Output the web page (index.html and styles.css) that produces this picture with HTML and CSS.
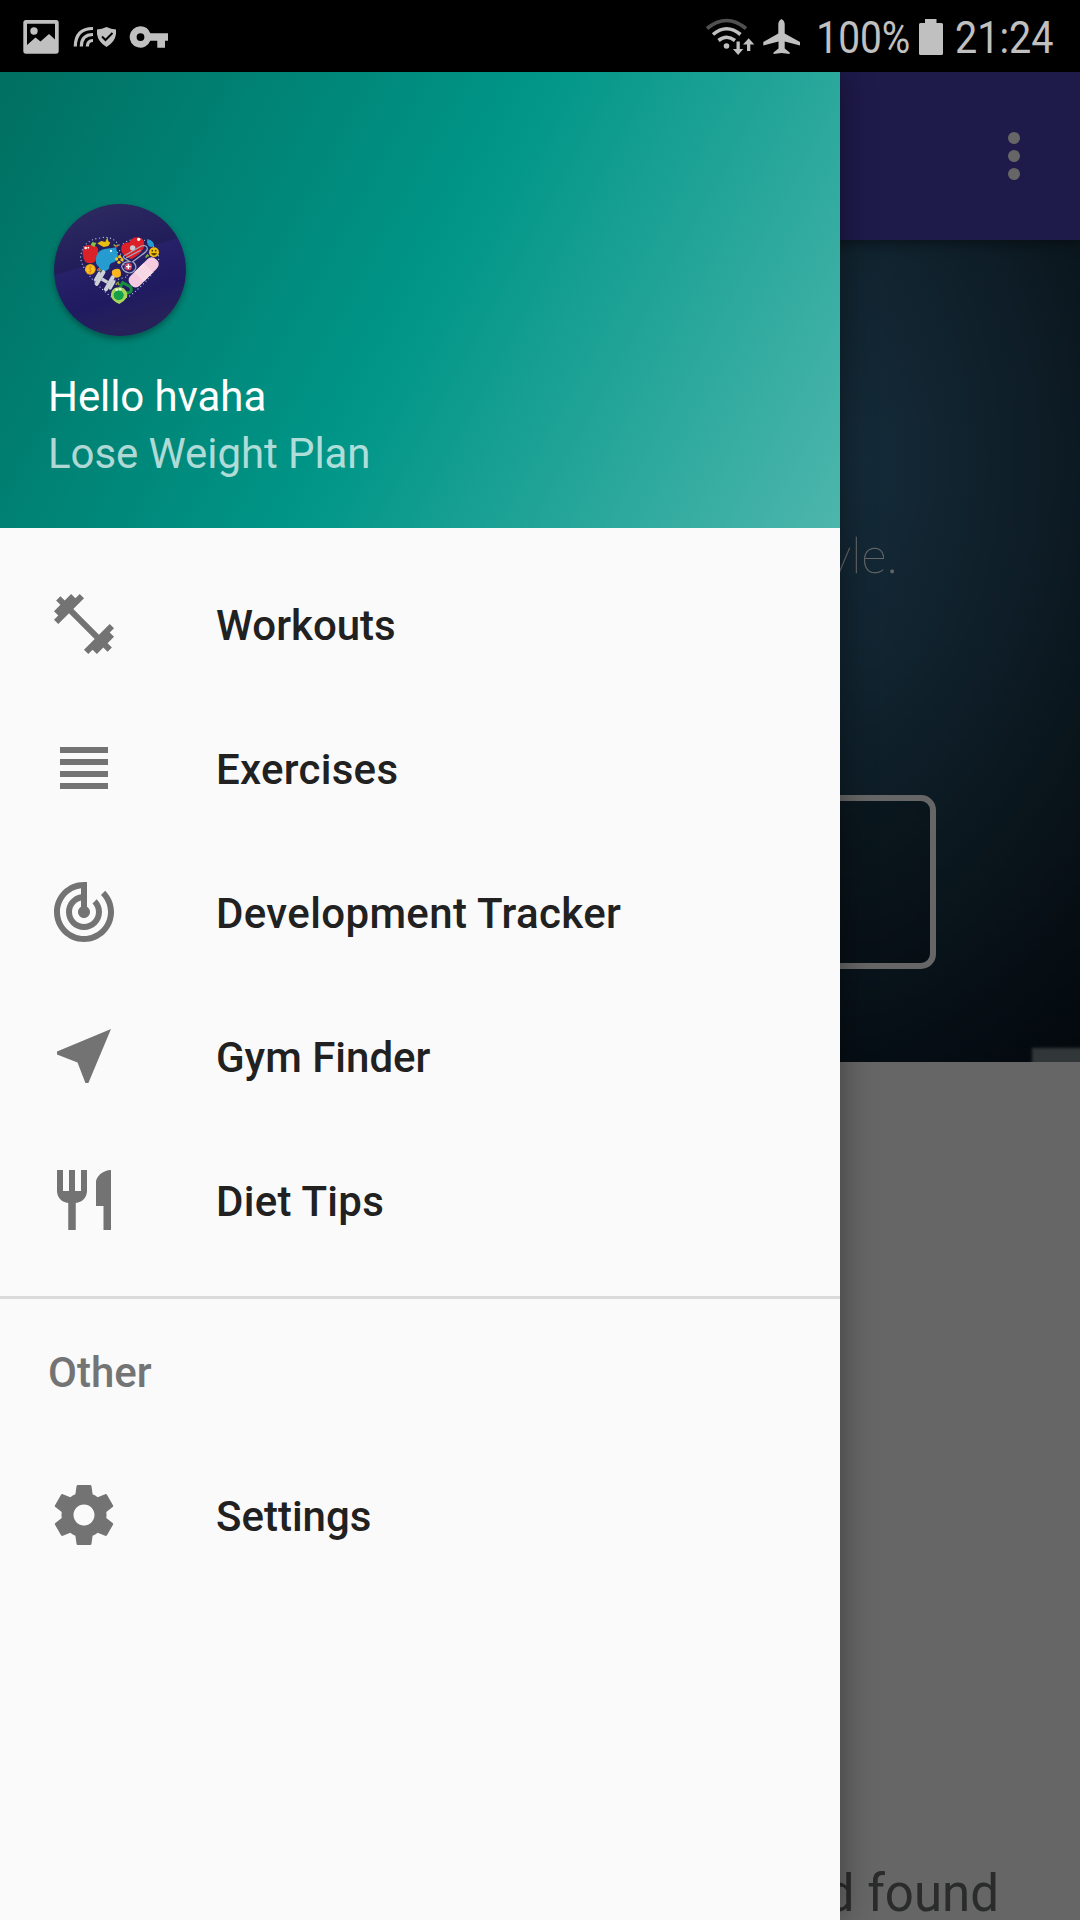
FILE: index.html
```html
<!DOCTYPE html>
<html lang="en">
<head>
<meta charset="utf-8">
<title>Workout app</title>
<link rel="stylesheet" href="styles.css">
</head>
<body>
<div class="screen">
  <header class="status">
    <svg class="st-image" width="42" height="72" viewBox="20 0 42 72"><path fill-rule="evenodd" d="M26 20h30q2.700 0 2.700 2.700v28.300q0 2.700-2.700 2.700H26q-2.700 0-2.700-2.700V22.700Q23.300 20 26 20zM27 23.700V45l8.500-7.500 5 4 8.500-7.500 6 5.500V23.700z"/><circle cx="34" cy="31" r="3.700"/></svg>
    <svg class="st-shield" width="46" height="72" viewBox="72 0 46 72"><g class="arcs"><path d="M75.300 46.500Q75.500 28.500 93 28.500M81.300 46.500Q81.500 34.500 93 34.500M87.300 46.500Q87.500 40.500 93 40.500"/></g><path d="M97 29.500Q102 29 106.500 27 111 29 116 29.500V34Q115 42 106.500 47 98 42 97 34z"/><path class="tick" d="M102 36.500l3.500 3.500 7-7"/></svg>
    <svg class="st-key" width="42" height="72" viewBox="128 0 42 72"><path fill-rule="evenodd" d="M140.500 26.300a10.700 10.700 0 1 0 9.800 14.500h7v6.900h7.700v-6.900h3v-7.500h-17.700a10.700 10.700 0 0 0-9.800-7zM140.500 33.200a3.900 3.900 0 1 1 0 7.800a3.900 3.900 0 0 1 0-7.800z"/></svg>
    <span class="spacer"></span>
    <svg width="52" height="72" viewBox="704 0 52 72"><g class="wifi"><path class="weak" d="M707 28.500Q726.500 12.500 746 28.500"/><path d="M713 34.500Q726.500 23 740.500 34.500M718.500 40.500Q726.500 34 735 40.500"/></g><circle cx="726.500" cy="46" r="2.800"/><path d="M736.500 41.500h3.300v7.500h3.500l-5.200 6-5.200-6h3.600zM747 51h3.300v-6.500h4L748.700 38.200l-5.700 6.300h4z"/></svg>
    <svg class="st-plane" width="38" height="72" viewBox="762 0 38 72"><path d="M781.500 19q3 1.500 3.200 5v9.500L800 42v3.500l-15.300-4v7l5 4V54l-8.200-1-8 1v-1.500l5-4v-7L763.300 45.500V42l15-8.500V24q.2-3.500 3.200-5z"/></svg>
    <svg class="st-pct" width="100" height="72" viewBox="813 0 100 72"><text x="816.300" y="53.300" textLength="94" lengthAdjust="spacingAndGlyphs">100%</text></svg>
    <svg class="st-bat" width="26" height="72" viewBox="918 0 26 72"><path d="M925 19h11.500v4h5q1.500 0 1.500 1.500V53.500q0 1.500-1.500 1.500h-21q-1.500 0-1.500-1.500V24.500q0-1.500 1.500-1.500h4.500z"/></svg>
    <svg class="st-time" width="106" height="72" viewBox="950 0 106 72"><text x="955" y="53.300" textLength="98.500" lengthAdjust="spacingAndGlyphs">21:24</text></svg>
  </header>

  <main class="page">
    <div class="appbar">
      <svg width="72" height="72" viewBox="0 0 24 24"><circle cx="12" cy="6" r="2"/><circle cx="12" cy="12" r="2"/><circle cx="12" cy="18" r="2"/></svg>
    </div>
    <section class="hero">
      <p class="tagline">yle.</p>
      <div class="cta"></div>
      <div class="ledge"></div>
    </section>
    <section class="feed"><p class="found">d found</p></section>
    <div class="scrim"></div>
  </main>

  <nav class="drawer">
    <div class="profile">
      <svg class="avatar" width="132" height="132" viewBox="42 42 396 396">
        <defs><linearGradient id="disc" x1="0" y1="0" x2=".3" y2="1"><stop offset="0" stop-color="#302c62"/><stop offset=".49" stop-color="#201d59"/><stop offset=".5" stop-color="#262168"/><stop offset=".8" stop-color="#201b60"/><stop offset="1" stop-color="#262158"/></linearGradient></defs>
        <circle cx="240" cy="240" r="198" fill="url(#disc)"/>
        <g fill="none" stroke="#aebbe0" stroke-width="4" stroke-linecap="round" stroke-dasharray="0 11"><path d="M237 165Q215 135 180 144 128 150 122 200 122 245 215 322"/><path d="M250 160Q275 145 300 146 358 165 356 210 345 260 260 325"/><path d="M188 250l50-70 25 80-55 15"/></g>
        <path fill="#d82228" d="M130 172q8-10 22-6 16-2 22 10 2 26-10 40-14 8-28 0-12-16-6-44z"/>
        <path fill="#8ac048" d="M152 165l5-9 12 3-6 12z"/><circle cx="137" cy="174" r="4" fill="#fff"/><circle cx="145" cy="173" r="2.500" fill="#fff"/>
        <path fill="#e9bd10" d="M172 160l12-7 12 3 6-14 3 12 6 4-6 10-14 3-10-5z"/>
        <path fill="#259bd0" d="M168 206q2-24 25-29l22 -3 14-2 1 10q6 12 2 25-6 10-18 12-8 6-6 16-8 10-22 9l-9-13q-12-8-9-25z"/>
        <circle cx="213" cy="183" r="3.500" fill="#e4f4ff"/>
        <path fill="#dc2028" d="M244 182q-4-25 25-25 6-17 27-15 20 6 16 28-6 20-38 38-24-8-30-26z"/>
        <circle cx="296" cy="148" r="5" fill="#fff"/><circle cx="278" cy="174" r="8" fill="#c5ccd6"/>
        <g fill="none" stroke="#a4abc0" stroke-width="3.500"><path d="M252 204q-4-6 5-9l47-27q18-5 18 9-2 8-17 18l-27 20q12 8 9 20-6 14-19 14-20-4-23-20 4-14 25-14zM258 204l44-23"/></g>
        <circle cx="265" cy="230" r="11" fill="#d94060"/><path d="M258 230h14M265 223v14" stroke="#fff" stroke-width="4"/>
        <path fill="#259bd0" d="M322 147q20 5 20 19-6 9-16 2-6-6-4-21z"/>
        <circle cx="342" cy="187" r="15" fill="#f0bd0b"/><path d="M333 189q9 15 18 0z" fill="#62420c"/><circle cx="337" cy="182" r="2.500" fill="#543708"/><circle cx="347" cy="182" r="2.500" fill="#543708"/>
        <g transform="rotate(-45 311 247)"><rect x="257" y="227" width="108" height="40" rx="17" fill="#f6cbe0"/><rect x="292" y="227" width="38" height="40" fill="#f9dbe8"/><path d="M299 239h26M299 247h26M299 255h26" stroke="#d79ebb" stroke-width="2" stroke-dasharray="2 6"/></g>
        <circle cx="151" cy="238" r="16" fill="#f5aa14"/><circle cx="151" cy="238" r="11" fill="#ffc42c"/><path d="M156 232q-8-5-10 1 0 4 5 5 6 2 3 6-4 4-9 0M151 228v20" fill="none" stroke="#d98c0c" stroke-width="2.500"/>
        <g fill="#f2c218"><circle cx="230" cy="207" r="5"/><circle cx="239" cy="200" r="5"/><circle cx="246" cy="209" r="5"/><circle cx="237" cy="217" r="5"/></g>
        <path fill="#fbb51e" d="M216 242q10-8 22-5 7 8 4 21-8 8-20 4-8-7-6-20z"/>
        <g fill="#cdd1d6" transform="rotate(30 194 272)"><rect x="164" y="256" width="9" height="32" rx="4"/><rect x="172" y="246" width="12" height="52" rx="5"/><rect x="184" y="267" width="20" height="10"/><rect x="204" y="246" width="12" height="52" rx="5"/><rect x="215" y="256" width="9" height="32" rx="4"/></g>
        <path d="M248 278l24 13q6 14-5 17l-25-1q-5-13 6-29z" fill="none" stroke="#168e3c" stroke-width="9"/>
        <path fill="#a7d55b" d="M223 295q14-7 28 0 14 12 10 27-8 12-23 20-20-8-25-23-1-16 10-24z"/><circle cx="236" cy="316" r="15" fill="#16a04a"/><circle cx="230" cy="299" r="4" fill="#efffe0"/><circle cx="240" cy="298" r="4" fill="#efffe0"/>
        <path d="M221 164l7 5 7-4M172 242l6-6 3 8M227 284l7-6 3 7M317 203l5-8 4 4" fill="none" stroke="#7fb340" stroke-width="5"/><path d="M228 167l4 4M174 236l3 3M231 279l3 3" stroke="#e23836" stroke-width="5"/>
      </svg>
      <p class="hello">Hello hvaha</p>
      <p class="plan">Lose Weight Plan</p>
    </div>
    <ul class="menu">
      <li><svg viewBox="0 0 24 24"><path d="M20.570 14.860L22 13.430 20.570 12 17 15.570 8.430 7 12 3.430 10.570 2 9.140 3.430 7.710 2 5.570 4.140 4.140 2.710 2.710 4.140l1.430 1.430L2 7.710l1.430 1.430L2 10.570 3.430 12 7 8.430 15.570 17 12 20.570 13.430 22l1.430-1.430L16.290 22l2.140-2.140 1.430 1.430 1.430-1.430-1.430-1.430L22 16.290z"/></svg><span>Workouts</span></li>
      <li class="loose"><svg viewBox="0 0 24 24"><path d="M4 15h16v-2H4v2zm0 4h16v-2H4v2zm0-8h16V9H4v2zm0-6v2h16V5H4z"/></svg><span>Exercises</span></li>
      <li class="looser"><svg viewBox="0 0 24 24"><path d="M19.070 4.930l-1.410 1.410C19.100 7.790 20 9.790 20 12c0 4.420-3.580 8-8 8s-8-3.580-8-8c0-4.080 3.050-7.440 7-7.930v2.020C8.160 6.570 6 9.030 6 12c0 3.310 2.690 6 6 6s6-2.690 6-6c0-1.660-.67-3.160-1.760-4.240l-1.410 1.410C15.550 9.900 16 10.900 16 12c0 2.210-1.790 4-4 4s-4-1.790-4-4c0-1.860 1.280-3.410 3-3.860v2.140c-.6.350-1 .98-1 1.720 0 1.100.9 2 2 2s2-.9 2-2c0-.74-.4-1.380-1-1.720V2h-1C6.480 2 2 6.480 2 12s4.480 10 10 10 10-4.480 10-10c0-2.760-1.120-5.260-2.930-7.070z"/></svg><span>Development Tracker</span></li>
      <li><svg viewBox="0 0 24 24"><path d="M21 3L3 10.530v.98l6.840 2.650L12.480 21h.98L21 3z"/></svg><span>Gym Finder</span></li>
      <li class="loose"><svg viewBox="0 0 24 24"><path d="M11 9H9V2H7v7H5V2H3v7c0 2.120 1.660 3.840 3.750 3.970V22h2.500v-9.030C11.340 12.840 13 11.120 13 9V2h-2v7zm5-3v8h2.500v8H21V2c-2.760 0-5 2.240-5 4z"/></svg><span>Diet Tips</span></li>
    </ul>
    <h2 class="group">Other</h2>
    <ul class="menu menu-last">
      <li><svg viewBox="0 0 24 24"><path d="M19.430 12.980c.04-.32.07-.64.07-.98s-.03-.66-.07-.98l2.110-1.650c.19-.15.24-.42.12-.64l-2-3.460c-.12-.22-.39-.3-.61-.22l-2.490 1c-.52-.4-1.080-.73-1.690-.98l-.38-2.650C14.460 2.180 14.250 2 14 2h-4c-.25 0-.46.18-.49.42l-.38 2.650c-.61.25-1.170.59-1.690.98l-2.490-1c-.23-.09-.49 0-.61.22l-2 3.460c-.13.22-.07.49.12.64l2.110 1.650c-.04.32-.07.65-.07.98s.03.66.07.98l-2.110 1.650c-.19.15-.24.42-.12.64l2 3.460c.12.22.39.3.61.22l2.490-1c.52.4 1.080.73 1.690.98l.38 2.650c.03.24.24.42.49.42h4c.25 0 .46-.18.49-.42l.38-2.650c.61-.25 1.170-.59 1.690-.98l2.490 1c.23.09.49 0 .61-.22l2-3.460c.12-.22.07-.49-.12-.64l-2.110-1.650zM12 15.500c-1.930 0-3.500-1.570-3.500-3.500s1.570-3.500 3.500-3.500 3.500 1.570 3.500 3.500-1.570 3.500-3.500 3.500z"/></svg><span>Settings</span></li>
    </ul>
  </nav>
</div>
</body>
</html>
```

FILE: styles.css
```css
* { box-sizing: border-box; }
body, p, ul, h2 { margin: 0; padding: 0; }
body { font-family: Roboto, "Liberation Sans", sans-serif; background: #000; }
svg { display: block; flex: none; overflow: visible; }

.screen {
  position: relative;
  width: 1080px;
  height: 1920px;
  overflow: hidden;
  display: flex;
  flex-direction: column;
}

/* Status bar */
.status {
  position: relative;
  z-index: 3;
  flex: none;
  height: 72px;
  padding: 0 24px 0 20px;
  display: flex;
  background: #000;
  fill: #c0c0c0;
}
.status text { font-size: 45px; }
.st-shield { margin-left: 10px; }
.st-key { margin-left: 10px; }
.spacer { flex: 1; }
.st-plane { margin-left: 6px; }
.st-pct { margin-left: 13px; }
.st-bat { margin-left: 5px; }
.st-time { margin-left: 6px; }
.arcs { fill: none; stroke: #c0c0c0; stroke-width: 3.2; }
.tick { fill: none; stroke: #000; stroke-width: 2; }
.wifi { fill: none; stroke: #c0c0c0; stroke-width: 3.6; }
.weak { stroke: #505050; }

/* Page behind the drawer */
.page {
  position: relative;
  flex: 1;
  display: flex;
  flex-direction: column;
  background: #fff;
}
.appbar {
  position: relative;
  z-index: 1;
  height: 168px;
  padding: 0 30px;
  display: flex;
  align-items: center;
  justify-content: flex-end;
  background: #4b41b9;
  fill: #fff;
  box-shadow: 0 4px 12px rgba(0, 0, 0, .4);
}
.hero {
  position: relative;
  height: 822px;
  overflow: hidden;
  background:
    linear-gradient(90deg, rgba(0, 0, 0, 0) 880px, rgba(0, 0, 0, .25) 1080px),
    radial-gradient(ellipse 620px 680px at 860px 220px, #33698c 0%, #2c5a78 30%, #1e4054 60%, #0f2233 90%, #08141f 105%, #060f1a 125%);
}
.tagline {
  height: 74px;
  margin: 277px 182px 0 0;
  font: 100 49px/74px Lato, sans-serif;
  text-align: right;
  color: #fff;
  -webkit-text-stroke: .4px #fff;
}
.cta {
  width: 792px;
  height: 174px;
  margin: 204px 0 0 144px;
  border: 6px solid #fff;
  border-radius: 15px;
  background: rgba(0, 0, 0, .2);
}
.ledge {
  position: absolute;
  right: -6px;
  bottom: -4px;
  width: 54px;
  height: 18px;
  background: #7b878e;
  filter: blur(1.5px);
}
.feed {
  flex: 1;
  display: flex;
  align-items: flex-end;
  justify-content: flex-end;
}
.found {
  padding-right: 81px;
  font-size: 51px;
  line-height: 60px;
  color: #696b6b;
  margin-bottom: -4px;
}
.scrim {
  position: absolute;
  inset: 0;
  z-index: 2;
  background: rgba(0, 0, 0, .6);
}

/* Drawer */
.drawer {
  position: absolute;
  z-index: 2;
  top: 72px;
  bottom: 0;
  left: 0;
  width: 840px;
  background: #fafafa;
  box-shadow: 0 0 32px rgba(0, 0, 0, .4);
}
.profile {
  height: 456px;
  padding: 132px 48px 0;
  background: linear-gradient(118.500deg, #006f61 0%, #009688 50%, #4db6ac 100%);
}
.avatar {
  margin-left: 6px;
  border-radius: 50%;
  box-shadow: 0 3px 6px rgba(0, 0, 0, .35);
}
.hello, .plan { font-size: 42px; line-height: 57px; letter-spacing: -.08px; }
.hello { margin-top: 32px; color: #fff; }
.plan { color: rgba(255, 255, 255, .7); }

.menu {
  list-style: none;
  padding: 24px 0;
  border-bottom: 3px solid #dadada;
}
.menu-last { padding: 0; border: 0; }
.menu li {
  height: 144px;
  padding: 0 48px;
  display: flex;
  align-items: center;
  gap: 96px;
  font-size: 42px;
  font-weight: 500;
  color: #212121;
}
.menu svg { width: 72px; height: 72px; fill: #737373; }
.menu span { padding-top: 2px; }
.menu .loose { letter-spacing: .28px; }
.menu .looser { letter-spacing: .36px; }
.group {
  height: 144px;
  padding: 0 48px;
  font-size: 42px;
  font-weight: 500;
  line-height: 148px;
  color: #747474;
}
```
